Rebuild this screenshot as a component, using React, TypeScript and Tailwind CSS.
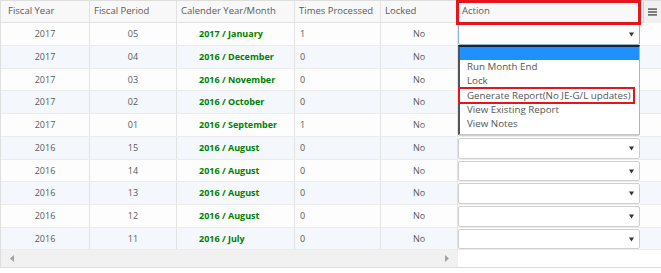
import { useState } from "react";

interface Period {
  fy: string;
  fp: string;
  cal: string;
  times: string;
  h: number;
}

const periods: Period[] = [
  { fy: "2017", fp: "05", cal: "2017 / January", times: "1", h: 23 },
  { fy: "2017", fp: "04", cal: "2016 / December", times: "0", h: 23 },
  { fy: "2017", fp: "03", cal: "2016 / November", times: "0", h: 22 },
  { fy: "2017", fp: "02", cal: "2016 / October", times: "0", h: 23 },
  { fy: "2017", fp: "01", cal: "2016 / September", times: "1", h: 23 },
  { fy: "2016", fp: "15", cal: "2016 / August", times: "0", h: 23 },
  { fy: "2016", fp: "14", cal: "2016 / August", times: "0", h: 22 },
  { fy: "2016", fp: "13", cal: "2016 / August", times: "0", h: 23 },
  { fy: "2016", fp: "12", cal: "2016 / August", times: "0", h: 23 },
  { fy: "2016", fp: "11", cal: "2016 / July", times: "0", h: 22 },
];

const actions = [
  "",
  "Run Month End",
  "Lock",
  "Generate Report(No JE-G/L updates)",
  "View Existing Report",
  "View Notes",
];

const Caret = () => (
  <svg width="5" height="5" viewBox="0 0 5 5" className="shrink-0">
    <path d="M0 0.5 L5 0.5 L2.5 4.5 Z" fill="#333" />
  </svg>
);

const SelectBox = ({ focused }: { focused?: boolean }) => (
  <div
    className={
      focused
        ? "flex h-full w-full items-center justify-end rounded-[2px] border border-[#8ab6e2] bg-white pr-[5px]"
        : "flex h-full w-full items-center justify-end rounded-[2px] border border-[#cfcfcf] bg-white pr-[5px]"
    }
  >
    <Caret />
  </div>
);

const App = () => {
  const [open] = useState(true);

  return (
    <div
      className="relative h-[273px] w-[661px] overflow-hidden bg-white text-[9px] text-[#5a5a5a]"
      style={{ fontFamily: '"Open Sans", "DejaVu Sans", sans-serif' }}
    >
      <div className="w-[661px] border-t border-b border-l border-[#dedede]">
        {/* header */}
        <div className="flex h-[22px] border-b border-[#e2e2e2] bg-[#f8f8f8] text-[9.5px]">
          <div className="flex w-[89px] items-center border-r border-[#e2e2e2] pl-[7px]">Fiscal Year</div>
          <div className="flex w-[87px] items-center border-r border-[#e2e2e2] pl-[4px]">Fiscal Period</div>
          <div className="flex w-[118px] items-center border-r border-[#e2e2e2] pl-[4px]">Calender Year/Month</div>
          <div className="flex w-[86px] items-center border-r border-[#e2e2e2] pl-[4px]">Times Processed</div>
          <div className="flex w-[77px] items-center border-r border-[#e2e2e2] pl-[4px]">Locked</div>
          <div className="flex w-[183px] items-center pl-[4px]">Action</div>
          <div className="flex flex-1 items-start justify-end">
            <div className="flex h-[22px] w-[18px] items-center justify-center border-l border-[#d4d4d4] bg-[#f1f1f1]">
              <svg width="9" height="8" viewBox="0 0 9 8">
                <rect x="0" y="0.5" width="9" height="1.2" fill="#333" />
                <rect x="0" y="3.4" width="9" height="1.2" fill="#333" />
                <rect x="0" y="6.3" width="9" height="1.2" fill="#333" />
              </svg>
            </div>
          </div>
        </div>

        {/* rows */}
        {periods.map((p, i) => (
          <div
            key={i}
            className={
              i % 2 === 0
                ? "flex border-b border-[#ececec] bg-[#fdfdfd]"
                : "flex border-b border-[#ececec] bg-[#f4f7fb]"
            }
            style={{ height: p.h }}
          >
            <div className="flex w-[89px] items-center justify-center border-r border-[#e2e2e2]">{p.fy}</div>
            <div className="flex w-[87px] items-center justify-center border-r border-[#e2e2e2]">{p.fp}</div>
            <div className="flex w-[118px] items-center border-r border-[#e2e2e2] pl-[22px] font-bold text-[#008000]">
              {p.cal}
            </div>
            <div className="flex w-[86px] items-center border-r border-[#e2e2e2] pl-[5px]">{p.times}</div>
            <div className="flex w-[77px] items-center justify-center border-r border-[#e2e2e2]">No</div>
            <div className="w-[182px] bg-white pt-px">
              <SelectBox focused={i === 0} />
            </div>
            <div className="flex-1" />
          </div>
        ))}

        {/* horizontal scrollbar */}
        <div className="flex h-[17px]">
          <div className="flex w-[457px] items-center justify-between bg-[#f1f1f1] px-[9px]">
            <svg width="4" height="7" viewBox="0 0 4 7">
              <path d="M4 0 L0 3.5 L4 7 Z" fill="#a3a3a3" />
            </svg>
            <svg width="4" height="7" viewBox="0 0 4 7">
              <path d="M0 0 L4 3.5 L0 7 Z" fill="#a3a3a3" />
            </svg>
          </div>
          <div className="flex-1 bg-white" />
        </div>
      </div>

      {/* open dropdown list */}
      {open && (
        <div className="absolute left-[458px] top-[45px] w-[182px] border-t-2 border-r border-b border-l-2 border-t-[#222] border-r-[#a9b6c6] border-b-[#c9c9c9] border-l-[#555] bg-white pb-[3px] text-[9.75px] leading-[14.3px]">
          {actions.map((a, i) => (
            <div
              key={i}
              className={i === 0 ? "h-[13px] bg-[#1e90ff]" : "h-[14.3px] whitespace-nowrap pl-[7px] text-[#555]"}
            >
              {a}
            </div>
          ))}
        </div>
      )}

      {/* highlight boxes */}
      <div className="pointer-events-none absolute left-[456px] top-0 h-[25px] w-[185px] border-[3px] border-[#e5141d]" />
      <div className="pointer-events-none absolute left-[458px] top-[87px] h-[17px] w-[177px] border-2 border-[#e5141d]" />
    </div>
  );
};

export default App;
